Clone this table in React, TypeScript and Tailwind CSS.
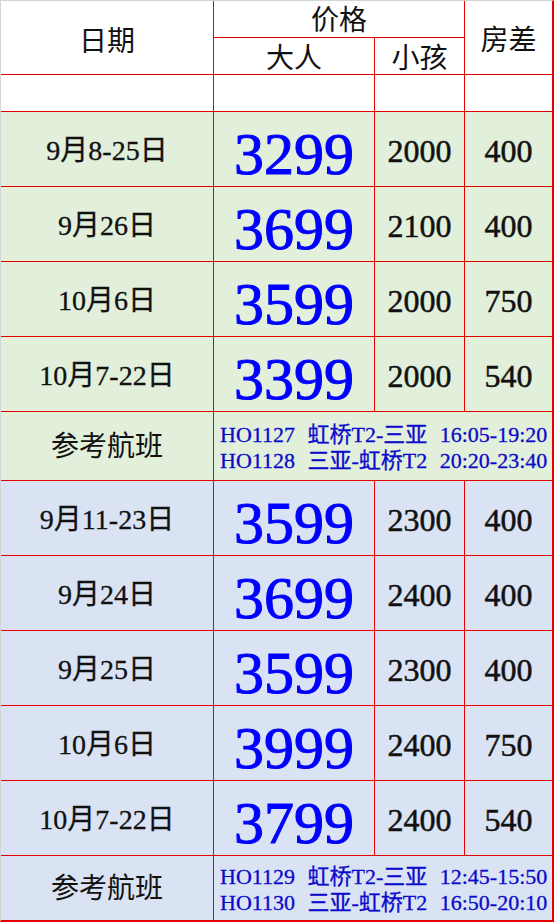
import React from "react";

type Row = [string, string, string, string];

const groups: { bg: string; rows: Row[]; flights: string[] }[] = [
  {
    bg: "bg-[#e2efda]",
    rows: [
      ["9月8-25日", "3299", "2000", "400"],
      ["9月26日", "3699", "2100", "400"],
      ["10月6日", "3599", "2000", "750"],
      ["10月7-22日", "3399", "2000", "540"],
    ],
    flights: ["HO1127 虹桥T2-三亚 16:05-19:20", "HO1128 三亚-虹桥T2 20:20-23:40"],
  },
  {
    bg: "bg-[#dae3f3]",
    rows: [
      ["9月11-23日", "3599", "2300", "400"],
      ["9月24日", "3699", "2400", "400"],
      ["9月25日", "3599", "2300", "400"],
      ["10月6日", "3999", "2400", "750"],
      ["10月7-22日", "3799", "2400", "540"],
    ],
    flights: ["HO1129 虹桥T2-三亚 12:45-15:50", "HO1130 三亚-虹桥T2 16:50-20:10"],
  },
];

const cell = "flex items-center justify-center";

export default function App() {
  return (
    <div className="w-[555px] h-[922px] bg-white font-['Liberation_Serif','Noto_Sans_CJK_SC',serif] text-[#111]">
      <div className="w-fit border-l border-t border-l-[#d4d4d4] border-t-[#d4d4d4] border-r-2 border-b-2 border-r-[#e60000] border-b-[#e60000]">
        <div className="grid grid-cols-[212px_160px_89px_87px] grid-rows-[36px_36px_36px_74px_74px_74px_74px_68px_74px_74px_74px_74px_74px_64px] gap-px bg-[#e60000]">
          {/* header */}
          <div className={`${cell} row-span-2 bg-white pt-[8px] text-[28px]`}>日期</div>
          <div className={`${cell} col-span-2 bg-white pt-[4px] text-[28px]`}>价格</div>
          <div className={`${cell} row-span-2 bg-white pt-[6px] text-[28px]`}>房差</div>
          <div className={`${cell} bg-white pt-[6px] text-[28px]`}>大人</div>
          <div className={`${cell} bg-white pt-[6px] text-[28px]`}>小孩</div>
          <div className="bg-white" />
          <div className="bg-white" />
          <div className="bg-white" />
          <div className="bg-white" />
          {groups.map((g, gi) => (
            <React.Fragment key={gi}>
              {g.rows.map((r, ri) => (
                <React.Fragment key={ri}>
                  <div className={`${cell} ${g.bg} pt-[4px] text-[28px] [-webkit-text-stroke:0.3px_#111]`}>{r[0]}</div>
                  <div className={`${cell} ${g.bg} pt-[9px] text-[60px] leading-none text-[#0000ff] [-webkit-text-stroke:1px_#0000ff]`}>{r[1]}</div>
                  <div className={`${cell} ${g.bg} pt-[4px] text-[32px] [-webkit-text-stroke:0.5px_#111]`}>{r[2]}</div>
                  <div className={`${cell} ${g.bg} pt-[4px] text-[32px] [-webkit-text-stroke:0.5px_#111]`}>{r[3]}</div>
                </React.Fragment>
              ))}
              <div className={`${cell} ${g.bg} pt-[2px] text-[28px]`}>参考航班</div>
              <div className={`col-span-3 flex flex-col justify-center ${g.bg} pl-[6px] pt-[3px] text-[22px] leading-[26px] text-[#0a0acc] whitespace-pre [word-spacing:7px] [-webkit-text-stroke:0.3px_#0a0acc]`}>
                {g.flights.map((f) => (
                  <div key={f}>{f}</div>
                ))}
              </div>
            </React.Fragment>
          ))}
        </div>
      </div>
    </div>
  );
}
